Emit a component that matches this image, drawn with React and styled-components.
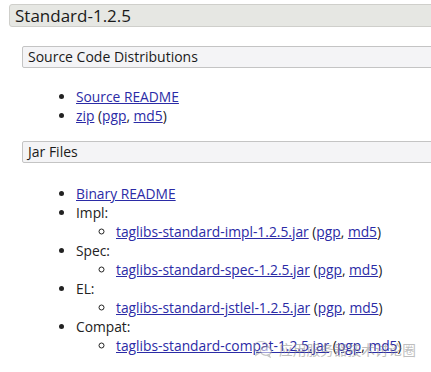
import React from 'react'
import styled, { createGlobalStyle } from 'styled-components'

const GlobalStyle = createGlobalStyle`
    html, body {
        margin: 0;
        padding: 0;
        background: #ffffff;
    }
    body {
        font-family: "Open Sans", "Noto Sans", "Noto Sans CJK SC", sans-serif;
        color: #222222;
    }
`

const Page = styled.div`
    width: 431px;
    height: 372px;
    overflow: hidden;
    position: relative;
    padding-top: 4px;
    box-sizing: border-box;
`

const Title = styled.h2`
    margin: 0 -20px 0 9px;
    height: 23px;
    line-height: 21px;
    padding-left: 5px;
    font-size: 17px;
    font-weight: 400;
    color: #1a1a1a;
    background: #e6e7e3;
    border: 1px solid #cfcfcb;
    border-radius: 3px 0 0 3px;
    box-sizing: border-box;
`

const Section = styled.div`
    margin-left: 22px;
`

const SectionTitle = styled.h3`
    margin: ${p => p.$top}px -20px 0 0;
    height: 22px;
    line-height: 20px;
    padding-left: 5px;
    font-size: 14px;
    font-weight: 400;
    color: #1a1a1a;
    background: #f4f4f6;
    border: 1px solid #c4c4c4;
    border-radius: 2px 0 0 2px;
    box-sizing: border-box;
`

const List = styled.ul`
    margin: ${p => p.$top || 0}px 0 0 0;
    padding-left: ${p => p.$indent}px;
    list-style: ${p => p.$type || 'disc'};
    font-size: 13.8px;
    line-height: 19px;
`

const Item = styled.li`
    color: #222222;
`

const Link = styled.a`
    color: #2b2ba6;
    text-decoration: underline;
`

const Watermark = styled.div`
    position: absolute;
    left: 253px;
    top: 339px;
    display: flex;
    align-items: center;
    gap: 6px;
    opacity: 0.55;
    font-family: "Noto Sans CJK SC", sans-serif;
    font-size: 13.7px;
    color: #8a8a8a;
`

const Jar = ({ name }) => (
    <Item>
        <Link href="#">{name}</Link> (<Link href="#">pgp</Link>, <Link href="#">md5</Link>)
    </Item>
)

const Group = ({ label, jar }) => (
    <Item>
        {label}
        <List $indent={40} $type="circle">
            <Jar name={jar} />
        </List>
    </Item>
)

const App = () => (
    <>
        <GlobalStyle />
        <Page>
            <Title>Standard-1.2.5</Title>
            <Section>
                <SectionTitle $top={19}>Source Code Distributions</SectionTitle>
                <List $top={19} $indent={54}>
                    <Item><Link href="#">Source README</Link></Item>
                    <Item>
                        <Link href="#">zip</Link> (<Link href="#">pgp</Link>, <Link href="#">md5</Link>)
                    </Item>
                </List>
                <SectionTitle $top={16}>Jar Files</SectionTitle>
                <List $top={21} $indent={54}>
                    <Item><Link href="#">Binary README</Link></Item>
                    <Group label="Impl:" jar="taglibs-standard-impl-1.2.5.jar" />
                    <Group label="Spec:" jar="taglibs-standard-spec-1.2.5.jar" />
                    <Group label="EL:" jar="taglibs-standard-jstlel-1.2.5.jar" />
                    <Group label="Compat:" jar="taglibs-standard-compat-1.2.5.jar" />
                </List>
            </Section>
            <Watermark>
                <svg width="20" height="18" viewBox="0 0 20 18" fill="none" stroke="#9a9a9a" strokeWidth="1.2">
                    <ellipse cx="8" cy="7" rx="7" ry="5.5" />
                    <path d="M4 11.5 L3 15 L7 12.4" />
                    <ellipse cx="13" cy="11" rx="5.5" ry="4.3" fill="#fff" />
                    <path d="M16 14.5 L17 17 L14 15.2" />
                </svg>
                <span>应用服务器技术讨论圈</span>
            </Watermark>
        </Page>
    </>
)

export default App
